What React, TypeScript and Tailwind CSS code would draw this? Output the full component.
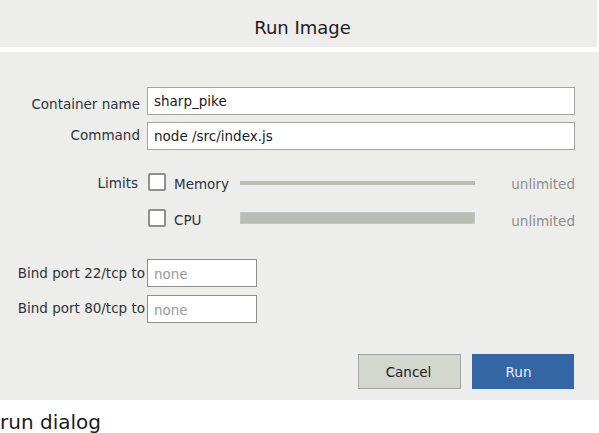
import React from "react";

function Checkbox() {
  return <div className="w-[18px] h-[18px] bg-white border-2 border-[#8f8f8d] rounded-[2px] shrink-0" />;
}

export default function App() {
  const font = { fontFamily: '"DejaVu Sans", sans-serif' };
  return (
    <div className="w-[599px] h-[433px] bg-white text-[#2e3436] text-[13.5px]" style={font}>
      <div className="h-[47px] mr-[2px] bg-[#ededeb] flex items-center justify-center pl-[8px] pt-[8px] text-[18px] text-[#1c1c1c]">
        Run Image
      </div>
      <div className="h-[5px]" />
      <div className="h-[348px] bg-[#ededeb] flex flex-col pt-[35px] pr-[24px]">
        <div className="flex items-center h-[28px]">
          <div className="w-[147px] text-right pr-[7px] leading-none pt-[7px]">Container name</div>
          <div className="flex-1 h-[28px] bg-white border border-[#a3a3a1] flex items-center pl-[6px] text-[#1c1c1c]">sharp_pike</div>
        </div>
        <div className="flex items-center h-[28px] mt-[7px]">
          <div className="w-[147px] text-right pr-[7px] leading-none">Command</div>
          <div className="flex-1 h-[28px] bg-white border border-[#a3a3a1] flex items-center pl-[6px] text-[#1c1c1c]">node /src/index.js</div>
        </div>
        <div className="flex items-center h-[18px] mt-[23px]">
          <div className="w-[148px] text-right pr-[10px] leading-none pt-[3px]">Limits</div>
          <Checkbox />
          <div className="w-[74px] pl-[8px] leading-none pt-[5px]">Memory</div>
          <div className="w-[235px] h-[4px] bg-[#babdb6] mt-[2px]" />
          <div className="flex-1 text-right text-[#8d8d8b] leading-none pt-[6px]">unlimited</div>
        </div>
        <div className="flex items-center h-[18px] mt-[18px]">
          <div className="w-[148px]" />
          <Checkbox />
          <div className="w-[74px] pl-[8px] leading-none pt-[6px]">CPU</div>
          <div className="w-[235px] h-[12px] bg-[#babdb6] border border-[#c4c6c0]" />
          <div className="flex-1 text-right text-[#8d8d8b] leading-none pt-[8px]">unlimited</div>
        </div>
        <div className="flex items-center h-[28px] mt-[32px]">
          <div className="w-[147px] text-right pr-[2px] leading-none pt-[1px]">Bind port 22/tcp to</div>
          <div className="w-[110px] h-[28px] bg-white border border-[#8f8f8d] flex items-center pl-[6px] pt-[3px] text-[#9a9a98]">none</div>
        </div>
        <div className="flex items-center h-[28px] mt-[8px]">
          <div className="w-[147px] text-right pr-[2px] leading-none">Bind port 80/tcp to</div>
          <div className="w-[110px] h-[28px] bg-white border border-[#8f8f8d] flex items-center pl-[6px] pt-[3px] text-[#9a9a98]">none</div>
        </div>
        <div className="flex justify-end gap-[11px] mt-[31px] pr-[1px]">
          <div className="w-[103px] h-[35px] bg-[#d3d7cf] border border-[#a3a3a0] flex items-center justify-center pt-[1px] pr-[2px] text-[#1c1c1c]">Cancel</div>
          <div className="w-[102px] h-[35px] bg-[#3465a4] flex items-center justify-center pt-[1px] pr-[9px] text-[#e8eef6]">Run</div>
        </div>
      </div>
      <div className="text-[20px] text-[#1c1c1c] leading-none pt-[12px]">run dialog</div>
    </div>
  );
}
